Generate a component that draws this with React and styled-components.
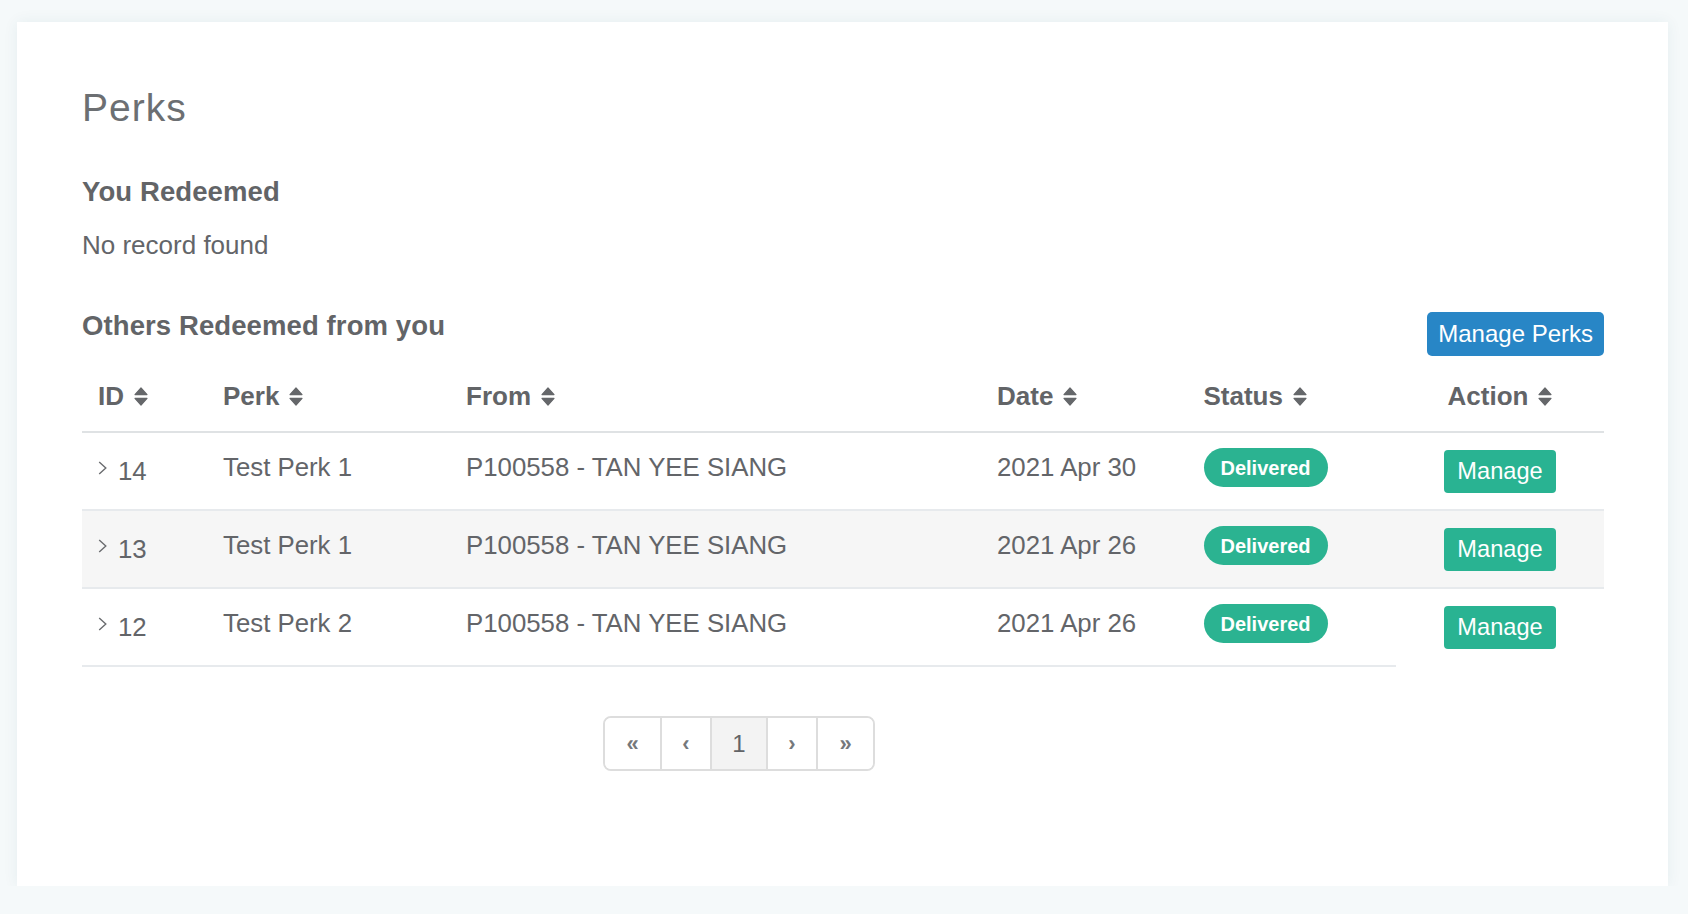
import React from "react";
import styled, { createGlobalStyle } from "styled-components";

const GlobalStyle = createGlobalStyle`
  html, body {
    margin: 0;
    padding: 0;
    background: #f5f9fa;
    font-family: "Liberation Sans", Arial, Helvetica, sans-serif;
    color: #636569;
  }
  * { box-sizing: border-box; }
`;

const Card = styled.div`
  margin: 22px 20px 0 17px;
  height: 864px;
  background: #ffffff;
  box-shadow: 0 0 14px rgba(20, 80, 100, 0.07);
  padding: 64px 64px 0 65px;
`;

const Title = styled.h1`
  margin: 0;
  font-size: 39px;
  line-height: 44px;
  font-weight: 400;
  letter-spacing: 1px;
  color: #6c6f72;
`;

const SubTitle = styled.h4`
  margin: ${(p) => p.$mt || 0}px 0 0;
  font-size: 27.5px;
  line-height: 32px;
  font-weight: 700;
  letter-spacing: 0.1px;
  color: #626467;
`;

const Empty = styled.p`
  margin: 21px 0 0;
  font-size: 26px;
  line-height: 32px;
  color: #636569;
`;

const SectionBar = styled.div`
  margin-top: 49px;
  display: flex;
  justify-content: space-between;
  align-items: flex-start;
  height: 46px;
`;

const PrimaryButton = styled.button`
  margin-top: 2px;
  height: 44px;
  padding: 0 11px;
  border: none;
  border-radius: 5px;
  background: #2886c6;
  color: #ffffff;
  font-family: inherit;
  font-size: 24px;
  line-height: 44px;
  cursor: pointer;
`;

const COLS = "125px 243px 531px 206.5px 208.5px 208px";

const Row = styled.div`
  display: grid;
  grid-template-columns: ${COLS};
  background: ${(p) => (p.$striped ? "#f6f6f6" : "transparent")};
`;

const HeadCell = styled.div`
  height: 77px;
  padding: 22px 16px 0;
  border-bottom: 2px solid #dfe2e4;
  display: flex;
  justify-content: ${(p) => (p.$center ? "center" : "flex-start")};
  align-items: flex-start;
`;

const HeadLabel = styled.span`
  display: inline-flex;
  align-items: center;
  font-size: 26px;
  line-height: 37px;
  font-weight: 700;
  color: #626467;
`;

const SortIcon = styled.svg`
  margin-left: 10px;
  width: 14px;
  height: 19px;
  flex: none;
`;

const Cell = styled.div`
  height: 78px;
  padding: ${(p) => p.$pt ?? 16}px 16px 0;
  border-bottom: 2px solid ${(p) => (p.$noBorder ? "transparent" : "#e7eaed")};
  display: flex;
  justify-content: ${(p) => (p.$center ? "center" : "flex-start")};
  align-items: flex-start;
  font-size: 25.8px;
  line-height: 36px;
  color: #636569;
  white-space: nowrap;
`;

const Chevron = styled.svg`
  width: 9px;
  height: 14px;
  margin-top: 8px;
  margin-right: 11px;
  flex: none;
`;

const Badge = styled.span`
  display: inline-block;
  height: 39px;
  padding: 0 17px;
  border-radius: 20px;
  background: #2bb391;
  color: #ffffff;
  font-size: 20px;
  font-weight: 700;
  line-height: 40px;
`;

const ActionButton = styled.button`
  height: 43px;
  padding: 0 13px;
  border: none;
  border-radius: 4px;
  background: #29b392;
  color: #ffffff;
  font-family: inherit;
  font-size: 23.6px;
  line-height: 43px;
  cursor: pointer;
`;

const PagerArea = styled.div`
  width: 1314px;
  margin-top: 49px;
  display: flex;
  justify-content: center;
`;

const Pager = styled.div`
  display: flex;
  border: 2px solid #dddddd;
  border-radius: 8px;
  overflow: hidden;
`;

const PageItem = styled.div`
  width: ${(p) => p.$w}px;
  height: 51px;
  display: flex;
  align-items: center;
  justify-content: center;
  border-left: ${(p) => (p.$first ? "none" : "2px solid #dddddd")};
  background: ${(p) => (p.$active ? "#f3f3f3" : "#ffffff")};
  color: ${(p) => (p.$active ? "#626467" : "#75787b")};
  font-size: ${(p) => (p.$active ? 24 : 22)}px;
  font-weight: ${(p) => (p.$active ? 400 : 700)};
`;

const Sort = () => (
  <SortIcon viewBox="0 0 14 19">
    <path
      d="M7 1 L13 7.6 H1 Z M1 11.4 H13 L7 18 Z"
      fill="#65676a"
      stroke="#65676a"
      strokeWidth="1.2"
      strokeLinejoin="round"
    />
  </SortIcon>
);

const headers = [
  { label: "ID" },
  { label: "Perk" },
  { label: "From" },
  { label: "Date" },
  { label: "Status" },
  { label: "Action", center: true },
];

const rows = [
  { id: 14, perk: "Test Perk 1", from: "P100558 - TAN YEE SIANG", date: "2021 Apr 30" },
  { id: 13, perk: "Test Perk 1", from: "P100558 - TAN YEE SIANG", date: "2021 Apr 26" },
  { id: 12, perk: "Test Perk 2", from: "P100558 - TAN YEE SIANG", date: "2021 Apr 26" },
];

const pages = [
  { label: "«", w: 55 },
  { label: "‹", w: 50 },
  { label: "1", w: 56, active: true },
  { label: "›", w: 50 },
  { label: "»", w: 57 },
];

export default function App() {
  return (
    <>
      <GlobalStyle />
      <Card>
        <Title>Perks</Title>
        <SubTitle $mt={46}>You Redeemed</SubTitle>
        <Empty>No record found</Empty>
        <SectionBar>
          <SubTitle>Others Redeemed from you</SubTitle>
          <PrimaryButton>Manage Perks</PrimaryButton>
        </SectionBar>

        <div>
          <Row>
            {headers.map((h) => (
              <HeadCell key={h.label} $center={h.center}>
                <HeadLabel>
                  {h.label}
                  <Sort />
                </HeadLabel>
              </HeadCell>
            ))}
          </Row>
          {rows.map((r, i) => {
            const last = i === rows.length - 1;
            return (
              <Row key={r.id} $striped={i % 2 === 1}>
                <Cell $pt={20}>
                  <Chevron viewBox="0 0 9 14">
                    <path
                      d="M1.2 1 L7.8 7 L1.2 13"
                      fill="none"
                      stroke="#6a6c6f"
                      strokeWidth="1.4"
                    />
                  </Chevron>
                  {r.id}
                </Cell>
                <Cell>{r.perk}</Cell>
                <Cell>{r.from}</Cell>
                <Cell>{r.date}</Cell>
                <Cell $pt={15}>
                  <Badge>Delivered</Badge>
                </Cell>
                <Cell $pt={17} $center $noBorder={last}>
                  <ActionButton>Manage</ActionButton>
                </Cell>
              </Row>
            );
          })}
        </div>

        <PagerArea>
          <Pager>
            {pages.map((p, i) => (
              <PageItem key={i} $w={p.w} $first={i === 0} $active={p.active}>
                {p.label}
              </PageItem>
            ))}
          </Pager>
        </PagerArea>
      </Card>
    </>
  );
}
